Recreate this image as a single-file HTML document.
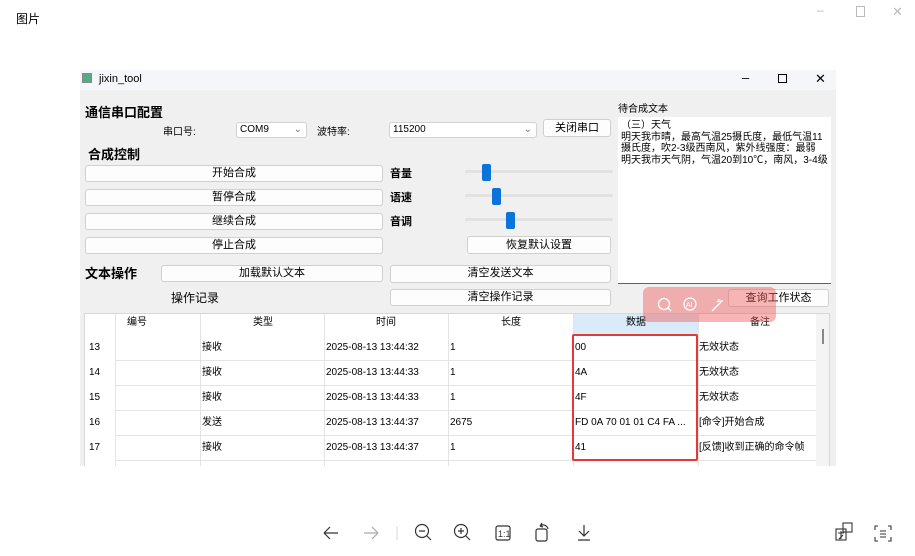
<!DOCTYPE html>
<html><head><meta charset="utf-8"><style>
*{box-sizing:border-box;margin:0;padding:0}
body{width:915px;height:556px;background:#fff;position:relative;overflow:hidden;font-family:"Liberation Sans","Noto Sans CJK SC",sans-serif;color:#000}
.a{position:absolute;white-space:nowrap}
.btn{position:absolute;background:#fdfdfd;border:1px solid #d0d0d0;border-radius:3px;font-size:11px;text-align:center;line-height:15px}
.b{font-weight:bold}
.trk{position:absolute;left:465px;width:148px;height:3px;background:#e2e2e2;border-radius:2px}
.hdl{position:absolute;width:9px;height:17px;background:#0a74da;border-radius:2px}
.cmb{position:absolute;background:#fff;border:1px solid #d2d2d2;border-radius:3px;font-size:10px;line-height:14px;padding-left:3px}
.tb{position:absolute;font-size:10px;line-height:24px}
</style></head><body>
<div class="a" style="left:16px;top:10px;font-size:12px">图片</div>
<div class="a" style="left:817px;top:3px;font-size:12px;color:#bbb">–</div>
<div class="a" style="left:856px;top:6px;width:9px;height:11px;border:1px solid #bbb"></div>
<div class="a" style="left:892px;top:4px;font-size:13px;color:#bbb">✕</div>

<div class="a" style="left:80px;top:70px;width:756px;height:396px;background:#f0f0f0;overflow:hidden">
 <div class="a" style="left:0;top:0;width:756px;height:20px;background:#f4f6fa"></div>
</div>
<div class="a" style="left:82px;top:73px;width:10px;height:10px;background:#5a8;border:1px solid #888"></div>
<div class="a" style="left:99px;top:73px;font-size:11px">jixin_tool</div>
<div class="a" style="left:742px;top:70px;font-size:13px">–</div>
<div class="a" style="left:778px;top:74px;width:9px;height:9px;border:1px solid #000"></div>
<div class="a" style="left:815px;top:71px;font-size:13px">✕</div>

<div class="a b" style="left:85px;top:102px;font-size:13px">通信串口配置</div>
<div class="a" style="left:163px;top:123px;font-size:10px">串口号:</div>
<div class="cmb" style="left:236px;top:122px;width:71px;height:16px">COM9<span style="position:absolute;right:4px;color:#777">⌄</span></div>
<div class="a" style="left:317px;top:123px;font-size:10px">波特率:</div>
<div class="cmb" style="left:389px;top:122px;width:148px;height:16px">115200<span style="position:absolute;right:4px;color:#777">⌄</span></div>
<div class="btn" style="left:543px;top:119px;width:68px;height:18px;line-height:16px">关闭串口</div>
<div class="a b" style="left:88px;top:144px;font-size:13px">合成控制</div>
<div class="btn" style="left:85px;top:165px;width:298px;height:17px">开始合成</div>
<div class="btn" style="left:85px;top:189px;width:298px;height:17px">暂停合成</div>
<div class="btn" style="left:85px;top:213px;width:298px;height:17px">继续合成</div>
<div class="btn" style="left:85px;top:237px;width:298px;height:17px">停止合成</div>
<div class="a b" style="left:390px;top:165px;font-size:11px">音量</div>
<div class="a b" style="left:390px;top:189px;font-size:11px">语速</div>
<div class="a b" style="left:390px;top:213px;font-size:11px">音调</div>
<div class="trk" style="top:170px"></div><div class="hdl" style="left:482px;top:164px"></div>
<div class="trk" style="top:194px"></div><div class="hdl" style="left:492px;top:188px"></div>
<div class="trk" style="top:218px"></div><div class="hdl" style="left:506px;top:212px"></div>
<div class="btn" style="left:467px;top:236px;width:144px;height:18px;line-height:16px">恢复默认设置</div>
<div class="a b" style="left:85px;top:263px;font-size:13px">文本操作</div>
<div class="btn" style="left:161px;top:265px;width:222px;height:17px">加载默认文本</div>
<div class="btn" style="left:390px;top:265px;width:221px;height:18px">清空发送文本</div>
<div class="a" style="left:171px;top:289px;font-size:12px">操作记录</div>
<div class="btn" style="left:390px;top:289px;width:221px;height:17px">清空操作记录</div>
<div class="a" style="left:618px;top:100px;font-size:10px">待合成文本</div>
<div class="a" style="left:618px;top:117px;width:213px;height:167px;background:#fff;border-bottom:1px solid #1a6fd0;font-size:10px;line-height:11.5px;padding:3px 3px;white-space:normal;overflow:hidden">（三）天气<br>明天我市晴，最高气温25摄氏度，最低气温11摄氏度，吹2-3级西南风，紫外线强度：最弱<br>明天我市天气阴，气温20到10℃，南风，3-4级</div>
<div class="btn" style="left:728px;top:289px;width:101px;height:18px;line-height:16px">查询工作状态</div>

<div class="a" style="left:84px;top:313px;width:746px;height:153px;background:#fff;border:1px solid #d8d8d8;border-bottom:none;overflow:hidden">
 <div class="a" style="left:488px;top:0;width:125px;height:22px;background:#d9eaf8"></div>
 <div class="tb" style="left:42px;top:-3px">编号</div>
 <div class="tb" style="left:168px;top:-3px">类型</div>
 <div class="tb" style="left:291px;top:-3px">时间</div>
 <div class="tb" style="left:416px;top:-3px">长度</div>
 <div class="tb" style="left:541px;top:-3px">数据</div>
 <div class="tb" style="left:665px;top:-3px">备注</div>
 <div style="position:absolute;left:30px;top:0;width:1px;height:160px;background:#e4e4e4"></div>
 <div style="position:absolute;left:115px;top:0;width:1px;height:160px;background:#e4e4e4"></div>
 <div style="position:absolute;left:239px;top:0;width:1px;height:160px;background:#e4e4e4"></div>
 <div style="position:absolute;left:363px;top:0;width:1px;height:160px;background:#e4e4e4"></div>
 <div style="position:absolute;left:488px;top:0;width:1px;height:160px;background:#e4e4e4"></div>
 <div style="position:absolute;left:613px;top:0;width:1px;height:160px;background:#e4e4e4"></div>
 <div style="position:absolute;left:731px;top:0;width:14px;height:160px;background:#f4f4f4"></div>
 <div style="position:absolute;left:737px;top:15px;width:2px;height:15px;background:#888"></div>
 <div style="position:absolute;left:30px;top:46px;width:701px;height:1px;background:#e4e4e4"></div>
 <div style="position:absolute;left:30px;top:71px;width:701px;height:1px;background:#e4e4e4"></div>
 <div style="position:absolute;left:30px;top:96px;width:701px;height:1px;background:#e4e4e4"></div>
 <div style="position:absolute;left:30px;top:121px;width:701px;height:1px;background:#e4e4e4"></div>
 <div style="position:absolute;left:30px;top:146px;width:701px;height:1px;background:#e4e4e4"></div>
 <div class="tb" style="left:4px;top:22px">13</div><div class="tb" style="left:117px;top:22px">接收</div><div class="tb" style="left:241px;top:22px">2025-08-13 13:44:32</div><div class="tb" style="left:365px;top:22px">1</div><div class="tb" style="left:490px;top:22px">00</div><div class="tb" style="left:614px;top:22px">无效状态</div>
 <div class="tb" style="left:4px;top:47px">14</div><div class="tb" style="left:117px;top:47px">接收</div><div class="tb" style="left:241px;top:47px">2025-08-13 13:44:33</div><div class="tb" style="left:365px;top:47px">1</div><div class="tb" style="left:490px;top:47px">4A</div><div class="tb" style="left:614px;top:47px">无效状态</div>
 <div class="tb" style="left:4px;top:72px">15</div><div class="tb" style="left:117px;top:72px">接收</div><div class="tb" style="left:241px;top:72px">2025-08-13 13:44:33</div><div class="tb" style="left:365px;top:72px">1</div><div class="tb" style="left:490px;top:72px">4F</div><div class="tb" style="left:614px;top:72px">无效状态</div>
 <div class="tb" style="left:4px;top:97px">16</div><div class="tb" style="left:117px;top:97px">发送</div><div class="tb" style="left:241px;top:97px">2025-08-13 13:44:37</div><div class="tb" style="left:365px;top:97px">2675</div><div class="tb" style="left:490px;top:97px">FD 0A 70 01 01 C4 FA ...</div><div class="tb" style="left:614px;top:97px">[命令]开始合成</div>
 <div class="tb" style="left:4px;top:122px">17</div><div class="tb" style="left:117px;top:122px">接收</div><div class="tb" style="left:241px;top:122px">2025-08-13 13:44:37</div><div class="tb" style="left:365px;top:122px">1</div><div class="tb" style="left:490px;top:122px">41</div><div class="tb" style="left:614px;top:122px">[反馈]收到正确的命令帧</div>
</div>
<div class="a" style="left:572px;top:334px;width:126px;height:127px;border:2px solid #e53935;border-radius:2px"></div>
<div class="a" style="left:643px;top:287px;width:133px;height:35px;background:rgba(240,90,90,0.45);border-radius:6px"></div>
<svg class="a" style="left:655px;top:296px" width="80" height="18" fill="none" stroke="#fff" stroke-width="1.3"><circle cx="9" cy="8" r="5.5"/><path d="M13 12l3 3"/><circle cx="35" cy="8" r="6"/><text x="31" y="11" font-size="7" fill="#fff" stroke="none" font-family="Liberation Sans">AI</text><path d="M57 15l9-9M64 3v3M68 5h-3M62 5l1 1"/></svg>

<div class="a" style="left:0;top:466px;width:915px;height:90px;background:#fff"></div>
<svg class="a" style="left:318px;top:520px" width="280" height="26" fill="none" stroke="#333" stroke-width="1.2">
<path d="M6 13h14M6 13l6-6M6 13l6 6"/>
<path d="M46 13h14M60 13l-6-6M60 13l-6 6" stroke="#aaa"/>
<path d="M79 6v14" stroke="#ddd"/>
<circle cx="104" cy="11" r="6.5"/><path d="M101 11h6M109 16l4 4"/>
<circle cx="143" cy="11" r="6.5"/><path d="M140 11h6M143 8v6M148 16l4 4"/>
<rect x="178" y="6" width="14" height="14" rx="2"/><text x="180" y="17" font-size="9" fill="#333" stroke="none" font-family="Liberation Sans">1:1</text>
<rect x="218" y="9" width="11" height="12" rx="2"/><path d="M222 6a5 5 0 0 1 8 3M222 6l2-3M222 6l3 1"/>
<path d="M266 5v11M261 11l5 5 5-5M260 20h12"/>
</svg>
<svg class="a" style="left:830px;top:520px" width="70" height="26" fill="none" stroke="#333" stroke-width="1.1">
<rect x="6" y="9" width="10" height="11"/><rect x="13" y="3" width="9" height="9"/><path d="M8 13h6M11 11v8M9 19l4-4"/>
<path d="M48 6h-3v4M48 21h-3v-4M58 6h3v4M58 21h3v-4M50 11h6M50 14h6M50 17h6"/>
</svg>
</body></html>
